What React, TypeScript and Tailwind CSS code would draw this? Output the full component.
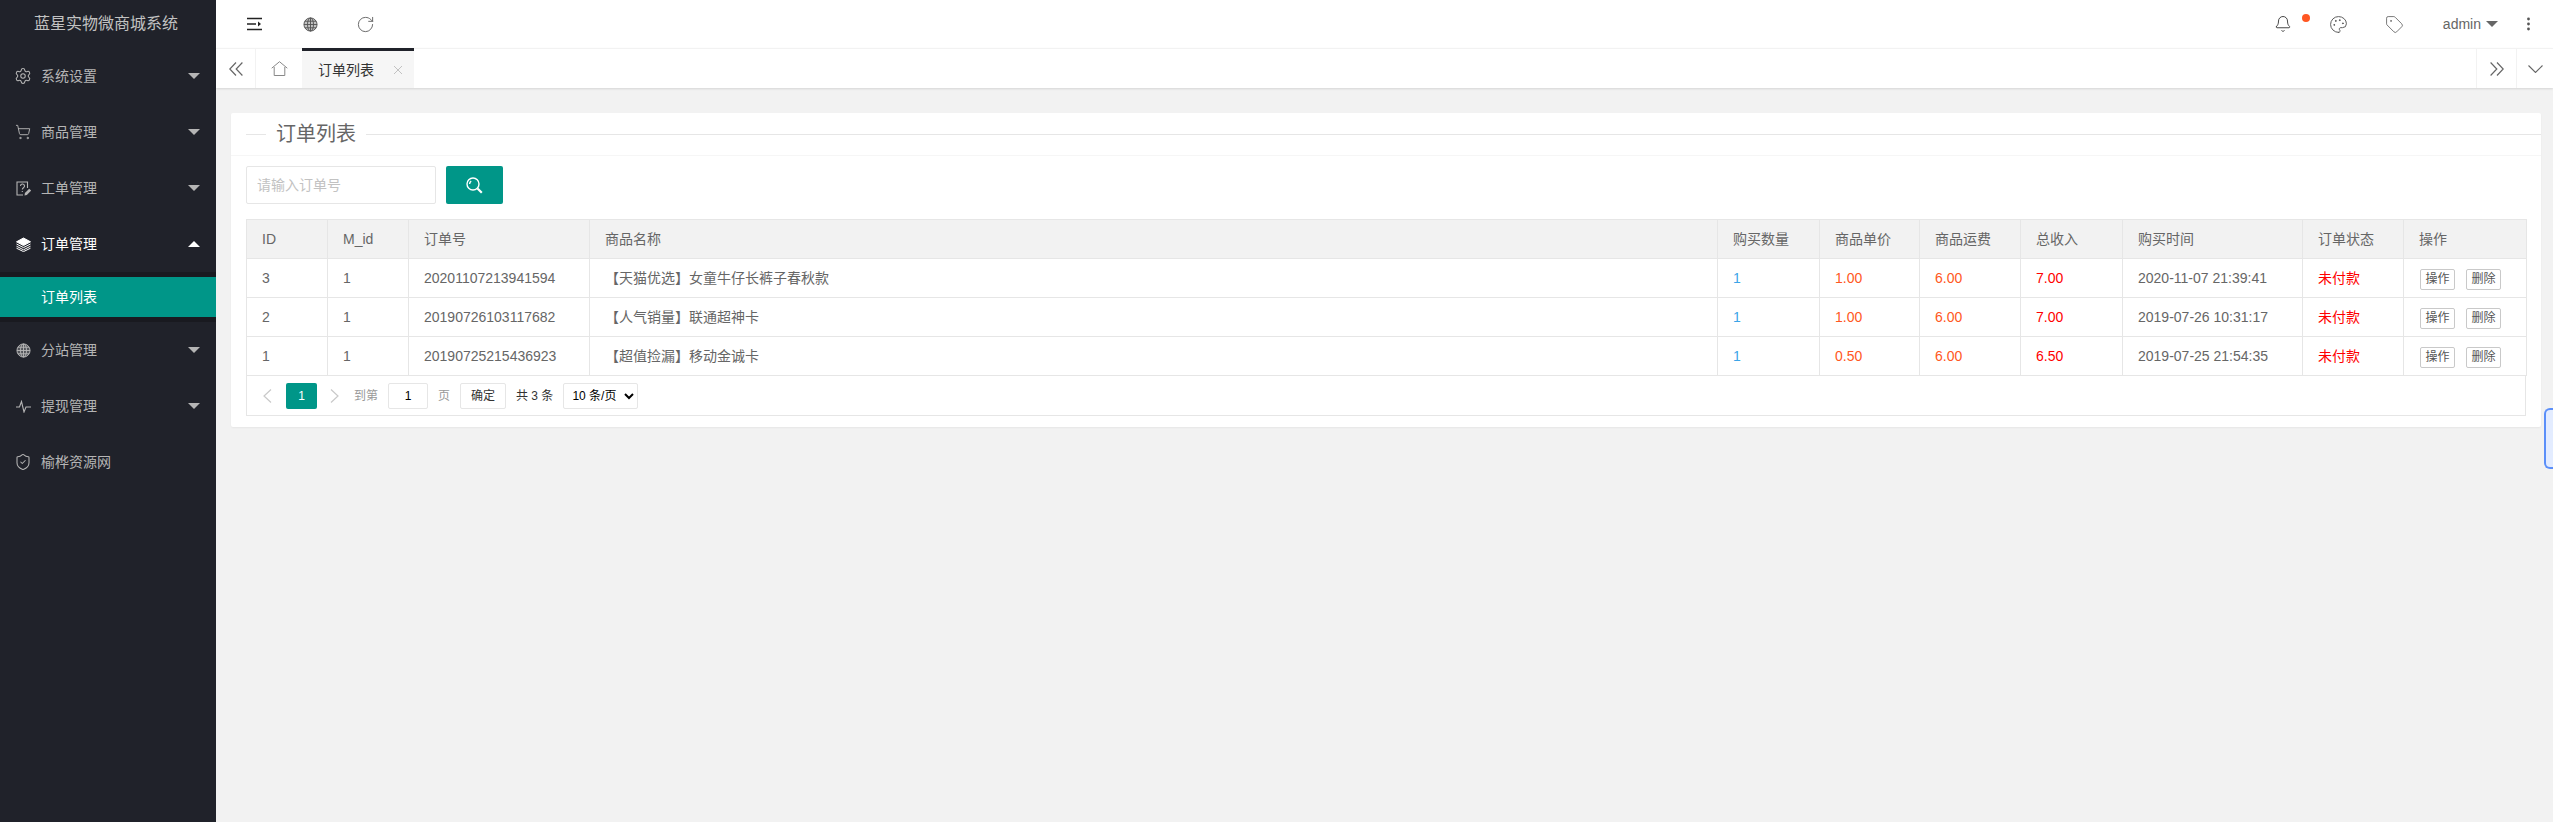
import React from 'react';
import { Bell, Palette, RotateCw, Settings, ShieldCheck, ShoppingCart, Tag } from 'lucide-react';

const font = "font-['Liberation_Sans','Noto_Sans_CJK_SC',sans-serif]";

// layui style icons that lucide doesn't have
function GlobeIcon({ className }: { className?: string }) {
  return (
    <svg className={className} viewBox="0 0 16 16" fill="none" stroke="currentColor" strokeWidth="1">
      <circle cx="8" cy="8" r="7" fill="currentColor" fillOpacity="0.35" />
      <ellipse cx="8" cy="8" rx="3.2" ry="7" />
      <path d="M8 1v14M1 8h14M2 4.5h12M2 11.5h12" />
    </svg>
  );
}

function TicketIcon({ className }: { className?: string }) {
  return (
    <svg className={className} viewBox="0 0 15 15" fill="none" stroke="currentColor" strokeWidth="1.1">
      <path d="M11.5 7V1H1v13h6" />
      <path d="M4.5 5a2 2 0 1 1 3 1.7C6.7 7.2 6.3 7.6 6.3 8.6" />
      <path d="M6.3 10v1" />
      <path d="M8.5 14.5l.4-2.4 4.3-4.3 1.9 1.9-4.3 4.3z" fill="currentColor" stroke="none" />
    </svg>
  );
}

function LayersIcon({ className }: { className?: string }) {
  return (
    <svg className={className} viewBox="0 0 15 15" fill="none" stroke="currentColor" strokeWidth="1">
      <path d="M7.5 1 14.5 4.8 7.5 8.6 0.5 4.8z" fill="currentColor" />
      <path d="M0.5 7 7.5 10.6 14.5 7M0.5 9.2 7.5 12.8 14.5 9.2M0.5 11.2 7.5 14.6 14.5 11.2" />
    </svg>
  );
}

function PulseIcon({ className }: { className?: string }) {
  return (
    <svg className={className} viewBox="0 0 15 13" fill="none" stroke="currentColor" strokeWidth="1.1">
      <path d="M0 7h3.5L5.5 1.5 8 12l2-5h5" />
    </svg>
  );
}

function SearchIcon({ className }: { className?: string }) {
  return (
    <svg className={className} viewBox="0 0 17 17" fill="none" stroke="currentColor" strokeWidth="1.4">
      <circle cx="7" cy="7" r="6" />
      <path d="M3.6 7a3.4 3.4 0 0 1 1.6-2.9" />
      <path d="M11.5 11.5l4.3 4.3" strokeWidth="2.2" />
    </svg>
  );
}

function HomeIcon({ className }: { className?: string }) {
  return (
    <svg className={className} viewBox="0 0 17 15" fill="none" stroke="currentColor" strokeWidth="1">
      <path d="M0.7 7.2 8.5 0.7l7.8 6.5" />
      <path d="M3.2 6v8.5h10.6V6" />
    </svg>
  );
}

const menu = [
  { icon: <Settings className="h-[18px] w-[18px]" strokeWidth={1.4} />, label: '系统设置', arrow: true },
  { icon: <ShoppingCart className="h-4 w-4" strokeWidth={1.4} />, label: '商品管理', arrow: true },
  { icon: <TicketIcon className="h-[15px] w-[15px]" />, label: '工单管理', arrow: true },
];

const menuAfter = [
  { icon: <GlobeIcon className="h-[15px] w-[15px]" />, label: '分站管理', arrow: true },
  { icon: <PulseIcon className="h-[13px] w-[15px]" />, label: '提现管理', arrow: true },
  { icon: <ShieldCheck className="h-[18px] w-[18px]" strokeWidth={1.4} />, label: '榆桦资源网', arrow: false },
];

const orders = [
  { id: 3, mid: 1, no: '20201107213941594', name: '【天猫优选】女童牛仔长裤子春秋款', qty: 1, price: '1.00', ship: '6.00', total: '7.00', time: '2020-11-07 21:39:41' },
  { id: 2, mid: 1, no: '20190726103117682', name: '【人气销量】联通超神卡', qty: 1, price: '1.00', ship: '6.00', total: '7.00', time: '2019-07-26 10:31:17' },
  { id: 1, mid: 1, no: '20190725215436923', name: '【超值捡漏】移动金诚卡', qty: 1, price: '0.50', ship: '6.00', total: '6.50', time: '2019-07-25 21:54:35' },
];

const headers = ['ID', 'M_id', '订单号', '商品名称', '购买数量', '商品单价', '商品运费', '总收入', '购买时间', '订单状态', '操作'];

function MenuItem({ icon, label, arrow }: { icon: React.ReactNode; label: string; arrow: boolean }) {
  return (
    <div className="flex h-14 items-center text-sm text-[#b5b5b5]">
      <span className="ml-[14px] mr-[9px] flex w-[18px] items-center justify-center">{icon}</span>
      <span>{label}</span>
      {arrow && <span className="ml-auto mr-[16px] h-0 w-0 border-x-[6px] border-t-[6px] border-x-transparent border-t-[#b5b5b5]" />}
    </div>
  );
}

function Sidebar() {
  return (
    <aside className="flex min-h-[822px] w-[216px] shrink-0 flex-col bg-[#20222a]">
      <div className="flex h-12 items-center justify-center pr-1 text-base text-[#c2c2c2]">蓝星实物微商城系统</div>
      {menu.map((m) => (
        <MenuItem key={m.label} {...m} />
      ))}
      <div className="flex h-14 items-center text-sm text-white">
        <span className="ml-[14px] mr-[9px] flex w-[18px] items-center justify-center">
          <LayersIcon className="h-[15px] w-[15px]" />
        </span>
        <span>订单管理</span>
        <span className="ml-auto mr-[16px] h-0 w-0 border-x-[6px] border-b-[6px] border-x-transparent border-b-white" />
      </div>
      <div className="bg-[#191a20] py-[5px]">
        <div className="flex h-10 items-center bg-[#009688] pl-[41px] text-sm text-white">订单列表</div>
      </div>
      {menuAfter.map((m) => (
        <MenuItem key={m.label} {...m} />
      ))}
    </aside>
  );
}

function TopBar() {
  return (
    <header className="flex h-12 items-center bg-white text-[#333]">
      <svg className="ml-[31px] h-[14px] w-[15px]" viewBox="0 0 15 14" fill="none" stroke="#222" strokeWidth="1.4">
        <path d="M0 1.5h15M0 7h9M0 12.5h15" />
        <path d="M11 4.5 14 7l-3 2.5z" fill="#222" stroke="none" />
      </svg>
      <GlobeIcon className="ml-[41px] h-[15px] w-[15px] text-[#555]" />
      <RotateCw className="ml-[38px] h-[19px] w-[19px] text-[#555]" strokeWidth={1.1} />
      <div className="ml-auto flex items-center">
        <Bell className="h-[18px] w-[18px] text-[#333]" strokeWidth={1.2} />
        <span className="mb-[12px] ml-[10px] h-2 w-2 rounded-full bg-[#ff5722]" />
        <Palette className="ml-[19px] h-[19px] w-[19px] text-[#555]" strokeWidth={1.2} />
        <Tag className="ml-[37px] h-[19px] w-[19px] text-[#666]" strokeWidth={1.1} />
        <span className="ml-[39px] text-sm text-[#666]">admin</span>
        <span className="ml-[5px] h-0 w-0 border-x-[6px] border-t-[6px] border-x-transparent border-t-[#666]" />
        <svg className="ml-[29px] mr-[23px] h-[14px] w-[3px]" viewBox="0 0 3 14" fill="#555">
          <circle cx="1.5" cy="2" r="1.4" />
          <circle cx="1.5" cy="7" r="1.4" />
          <circle cx="1.5" cy="12" r="1.4" />
        </svg>
      </div>
    </header>
  );
}

function TabBar() {
  return (
    <div className="relative flex h-10 items-stretch border-t border-[#f2f2f2] bg-white shadow-[0_1px_2px_rgba(0,0,0,0.12)]">
      <div className="flex w-10 items-center justify-center border-r border-[#f2f2f2] text-[#666]">
        <svg className="h-[14px] w-[14px]" viewBox="0 0 14 14" fill="none" stroke="currentColor" strokeWidth="1.2">
          <path d="M7 0.5.8 7 7 13.5M13.4 0.5 7.2 7l6.2 6.5" />
        </svg>
      </div>
      <div className="flex w-[46px] items-center justify-center text-[#888]">
        <HomeIcon className="h-[15px] w-[17px]" />
      </div>
      <div className="-mt-px flex w-[112px] items-center border-t-[3px] border-[#20222a] bg-[#f6f6f6] pl-4 text-sm text-[#333]">
        订单列表
        <svg className="ml-5 h-2 w-2 text-[#c2c2c2]" viewBox="0 0 8 8" fill="none" stroke="currentColor" strokeWidth="1">
          <path d="M0 0l8 8M8 0 0 8" />
        </svg>
      </div>
      <div className="ml-auto flex w-10 items-center justify-center border-l border-[#f2f2f2] text-[#666]">
        <svg className="h-[14px] w-[14px]" viewBox="0 0 14 14" fill="none" stroke="currentColor" strokeWidth="1.2">
          <path d="M7 0.5 13.2 7 7 13.5M.6 0.5 6.8 7 .6 13.5" />
        </svg>
      </div>
      <div className="flex w-[37px] items-center justify-center border-l border-[#f2f2f2] text-[#666]">
        <svg className="h-2 w-[15px]" viewBox="0 0 15 8" fill="none" stroke="currentColor" strokeWidth="1.1">
          <path d="M.5 .5 7.5 7.5 14.5 .5" />
        </svg>
      </div>
    </div>
  );
}

function OrderTable() {
  return (
    <table className="w-[2280px] table-fixed border-collapse text-sm text-[#666]">
      <colgroup>
        <col className="w-[81px]" />
        <col className="w-[81px]" />
        <col className="w-[181px]" />
        <col className="w-[1128px]" />
        <col className="w-[102px]" />
        <col className="w-[100px]" />
        <col className="w-[101px]" />
        <col className="w-[102px]" />
        <col className="w-[180px]" />
        <col className="w-[101px]" />
        <col className="w-[123px]" />
      </colgroup>
      <thead>
        <tr className="h-[39px] bg-[#f2f2f2]">
          {headers.map((h) => (
            <th key={h} className="border border-[#e6e6e6] px-[15px] text-left font-normal">
              {h}
            </th>
          ))}
        </tr>
      </thead>
      <tbody>
        {orders.map((o) => (
          <tr key={o.id} className="h-[39px]">
            <td className="border border-[#e6e6e6] px-[15px]">{o.id}</td>
            <td className="border border-[#e6e6e6] px-[15px]">{o.mid}</td>
            <td className="border border-[#e6e6e6] px-[15px]">{o.no}</td>
            <td className="border border-[#e6e6e6] px-[15px]">{o.name}</td>
            <td className="border border-[#e6e6e6] px-[15px] text-[#3ba5e8]">{o.qty}</td>
            <td className="border border-[#e6e6e6] px-[15px] text-[#ff5722]">{o.price}</td>
            <td className="border border-[#e6e6e6] px-[15px] text-[#ff5722]">{o.ship}</td>
            <td className="border border-[#e6e6e6] px-[15px] text-[#ff0000]">{o.total}</td>
            <td className="border border-[#e6e6e6] px-[15px]">{o.time}</td>
            <td className="border border-[#e6e6e6] px-[15px] text-[#ff0000]">未付款</td>
            <td className="border border-[#e6e6e6] pl-4">
              <div className="flex gap-[11px] pt-[2px]">
                <button className="h-[21px] w-[35px] rounded-[2px] border border-[#c9c9c9] bg-white text-xs text-[#555]">操作</button>
                <button className="h-[21px] w-[35px] rounded-[2px] border border-[#c9c9c9] bg-white text-xs text-[#555]">删除</button>
              </div>
            </td>
          </tr>
        ))}
      </tbody>
    </table>
  );
}

function Pager() {
  return (
    <div className="flex h-10 w-[2280px] items-center border border-t-0 border-[#e6e6e6] pl-4 text-xs text-[#333]">
      <svg className="h-[14px] w-[9px] text-[#c9c9c9]" viewBox="0 0 9 14" fill="none" stroke="currentColor" strokeWidth="1.2">
        <path d="M8 .5 1 7l7 6.5" />
      </svg>
      <span className="ml-[14px] flex h-[26px] w-[31px] items-center justify-center rounded-[2px] bg-[#009688] text-white">1</span>
      <svg className="ml-[13px] h-[14px] w-[9px] text-[#c9c9c9]" viewBox="0 0 9 14" fill="none" stroke="currentColor" strokeWidth="1.2">
        <path d="M1 .5 8 7l-7 6.5" />
      </svg>
      <span className="ml-[15px] text-[#999]">到第</span>
      <span className="ml-[10px] flex h-[26px] w-10 items-center justify-center rounded-[2px] border border-[#e6e6e6] text-black">1</span>
      <span className="ml-[10px] text-[#999]">页</span>
      <span className="ml-[10px] flex h-[26px] w-[46px] items-center justify-center rounded-[2px] border border-[#e6e6e6]">确定</span>
      <span className="ml-[10px]">共 3 条</span>
      <select defaultValue="10" className="ml-[10px] h-[26px] w-[75px] rounded-[2px] border border-[#e6e6e6] bg-white pl-[4px] text-black">
        <option value="10">10 条/页</option>
      </select>
    </div>
  );
}

export default function App() {
  return (
    <div className={`flex min-h-[822px] bg-[#f2f2f2] ${font}`}>
      <Sidebar />
      <main className="relative min-w-0 flex-1">
        <TopBar />
        <TabBar />
        <div className="mx-[15px] mt-[25px] w-[2310px] rounded-[2px] bg-white pb-[11px] shadow-[0_1px_2px_rgba(0,0,0,0.05)]">
          <div className="flex h-[43px] items-center border-b border-[#f6f6f6] pl-[15px]">
            <span className="h-px w-5 bg-[#e6e6e6]" />
            <span className="px-[10px] text-xl leading-none text-[#666]">订单列表</span>
            <span className="h-px flex-1 bg-[#e6e6e6]" />
          </div>
          <div className="flex gap-[10px] pl-[15px] pt-[10px]">
            <input placeholder="请输入订单号" className="h-[38px] w-[190px] rounded-[2px] border border-[#e6e6e6] px-[10px] text-sm outline-none placeholder:text-[#c2c2c2]" />
            <button className="flex h-[38px] w-[57px] items-center justify-center rounded-[2px] bg-[#009688] text-white">
              <SearchIcon className="h-[17px] w-[17px]" />
            </button>
          </div>
          <div className="pl-[15px] pt-[15px]">
            <OrderTable />
            <Pager />
          </div>
        </div>
        <div className="absolute right-0 top-[408px] h-[61px] w-[9px] rounded-l-md border-2 border-r-0 border-[#5b8ff9] bg-[#e3ecff]" />
      </main>
    </div>
  );
}
